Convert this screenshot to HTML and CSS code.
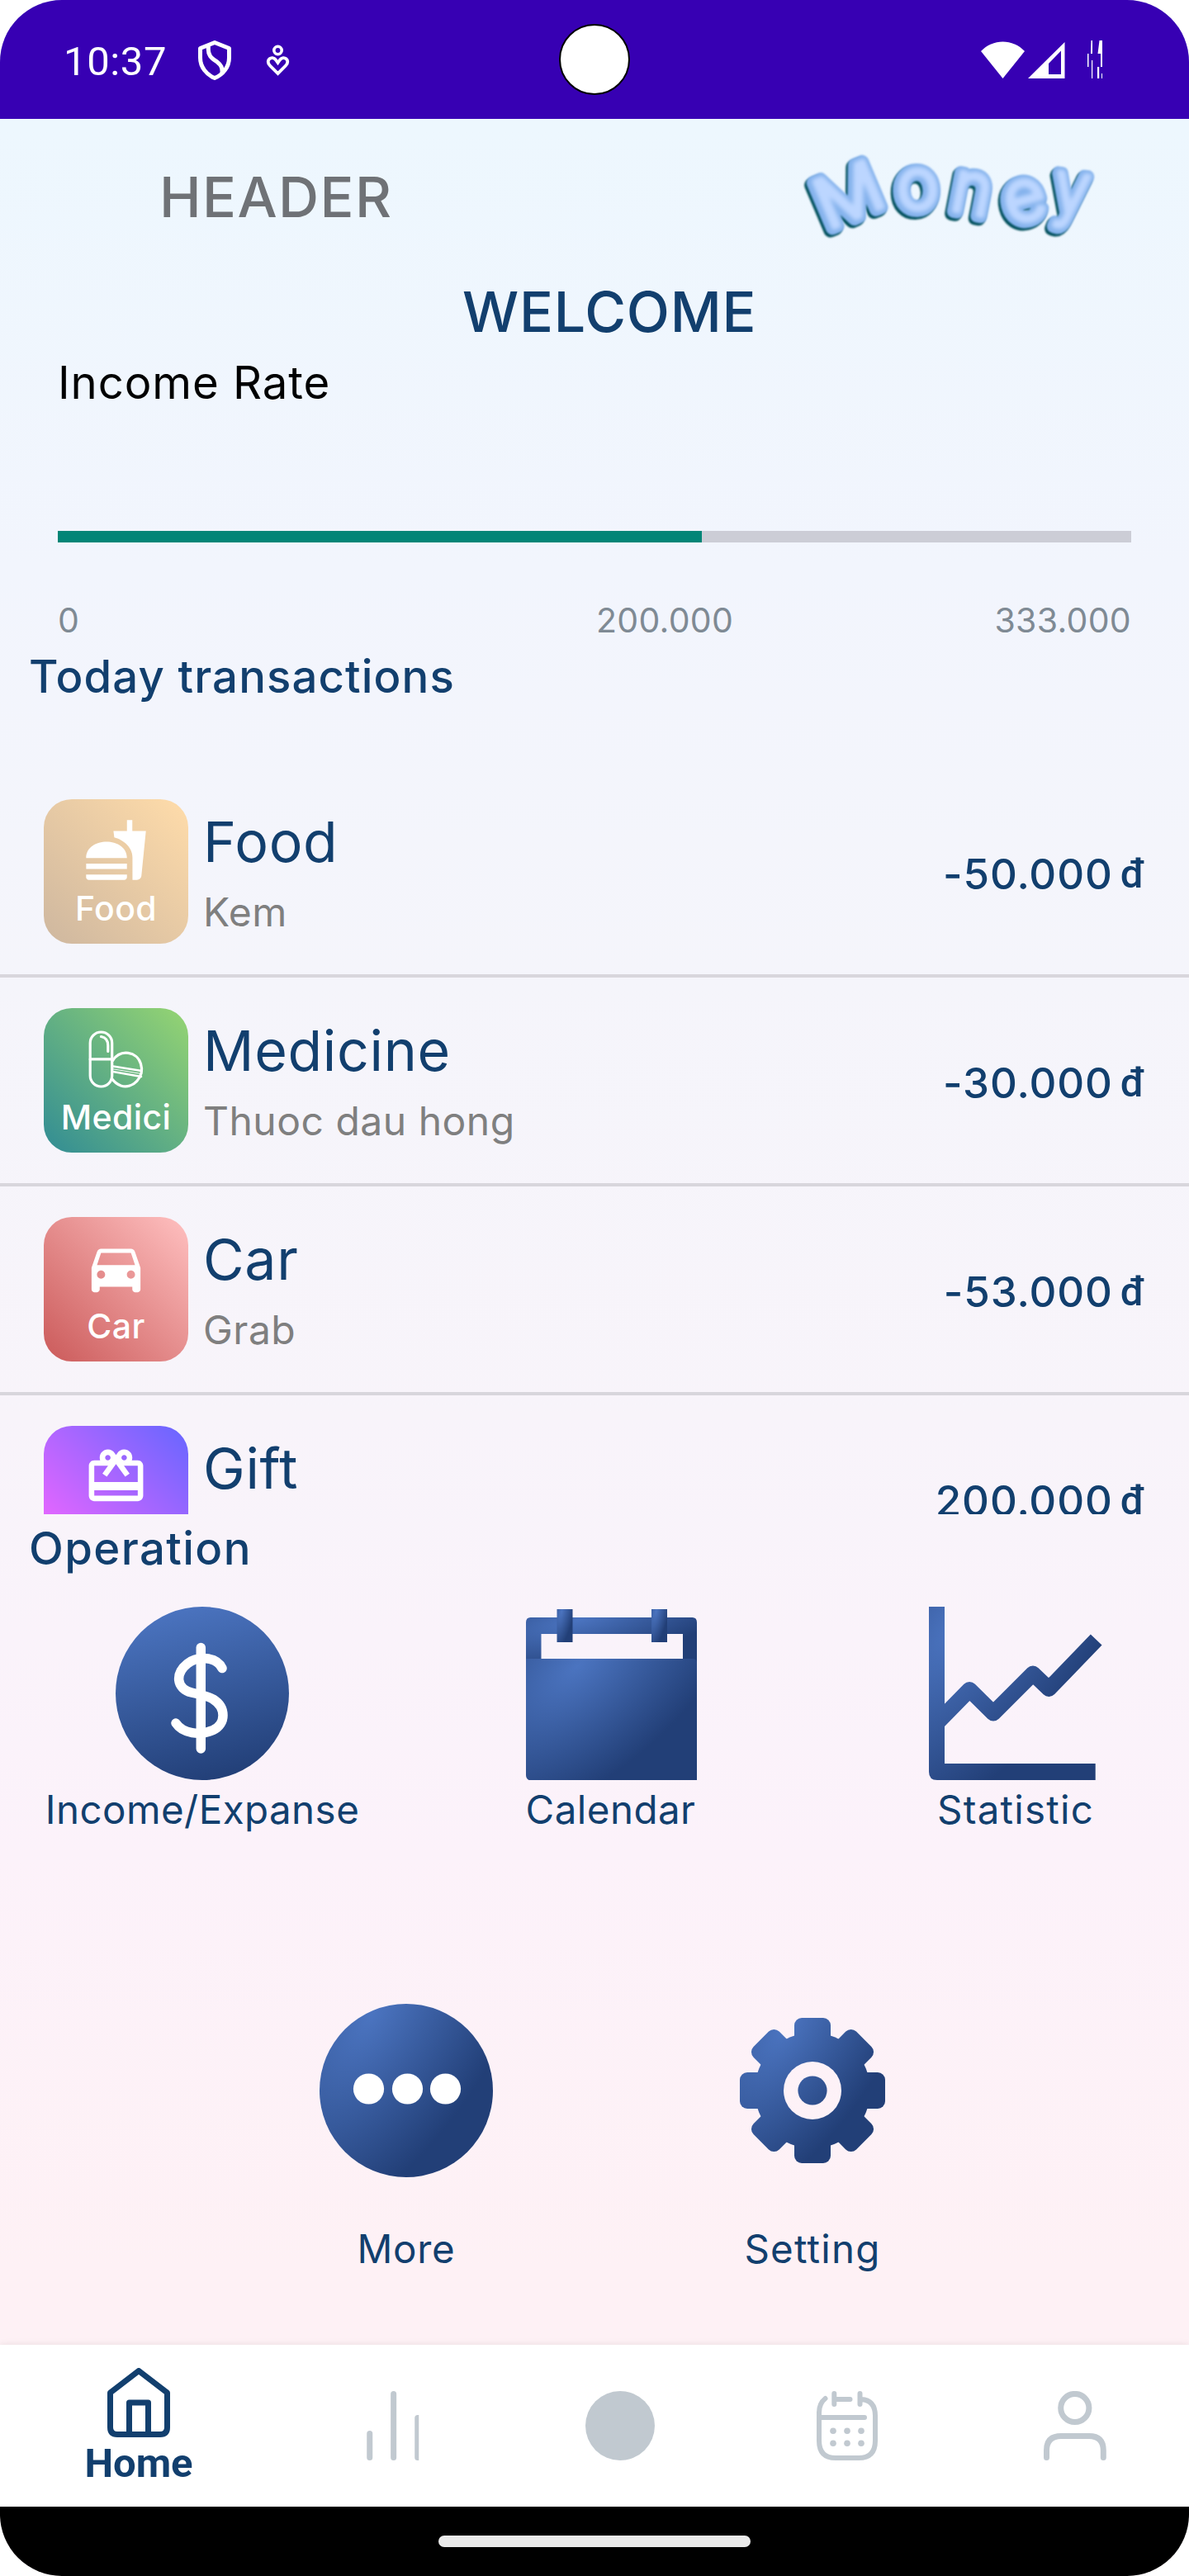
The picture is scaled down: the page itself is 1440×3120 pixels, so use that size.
FILE: index.html
```html
<!DOCTYPE html>
<html lang="en">
<head>
<meta charset="utf-8">
<title>Money</title>
<link rel="stylesheet" href="styles.css">
</head>
<body>
<div class="phone">
  <header class="status">
    <span class="clock">10:37</span>
    <svg class="status-left" viewBox="236 42 120 60">
      <g fill="none" stroke="#fff" stroke-linejoin="round">
        <path stroke-width="5" d="M260 51.500L277.500 58.500V70C277.500 81 270 90.500 260 94.500C250 90.500 242.500 81 242.500 70V58.500Z"/>
        <path stroke-width="5" d="M252.500 56C251 68 257 71 263 75C268 79 269.500 82 269 89"/>
        <circle cx="336.500" cy="61" r="4.700" stroke-width="3.600"/>
        <path stroke-width="3.800" stroke-linejoin="miter" d="M336.500 89L327 79.500C320.500 73 329.500 66.500 334 72.500L336.500 76L339 72.500C343.500 66.500 352.500 73 346 79.500Z"/>
      </g>
    </svg>
    <i class="camera"></i>
    <svg class="status-right" viewBox="1186 42 152 60">
      <g fill="#fff">
        <path d="M1188 62C1202 46.500 1227 46.500 1241 62L1214.500 95Z"/>
        <path fill-rule="evenodd" d="M1245 95L1289.500 51V95ZM1270 90H1285V61.500L1270 77Z"/>
        <path d="M1321.500 49h1.500v16h-2zM1317 65h1.500v16h-1.500zM1322 73h1.200v22h-1.200zM1331.500 49h3.500v16h-5.500zM1333 65h2v16h-2zM1329 81h2.200v14h-2.200zM1334 89h1v6h-1z"/>
      </g>
    </svg>
  </header>

  <div class="topbar">
    <span class="topbar-title">HEADER</span>
    <svg class="logo" viewBox="966 180 370 120">
      <defs>
        <filter id="soft" x="-20%" y="-20%" width="140%" height="140%"><feGaussianBlur stdDeviation="2.800"/></filter>
        <filter id="edge" x="-20%" y="-20%" width="140%" height="140%"><feGaussianBlur stdDeviation="1"/></filter>
      </defs>
      <g class="logo-shade" transform="translate(-2.500 3)" filter="url(#edge)">
        <text transform="translate(1038 265) rotate(-23) scale(1.080 1)">M</text><text class="round" transform="translate(1111 255) rotate(-2)">o</text><text class="round" transform="translate(1171 260) rotate(11) scale(.940 1)">n</text><text class="round" transform="translate(1246 268) rotate(-15)">e</text><text class="round" transform="translate(1293 260) rotate(8) scale(.880 1)">y</text>
      </g>
      <g class="logo-body" filter="url(#edge)">
        <text transform="translate(1038 265) rotate(-23) scale(1.080 1)">M</text><text class="round" transform="translate(1111 255) rotate(-2)">o</text><text class="round" transform="translate(1171 260) rotate(11) scale(.940 1)">n</text><text class="round" transform="translate(1246 268) rotate(-15)">e</text><text class="round" transform="translate(1293 260) rotate(8) scale(.880 1)">y</text>
      </g>
      <g class="logo-shine" transform="translate(1.500 -1)" filter="url(#soft)">
        <text transform="translate(1038 265) rotate(-23) scale(1.080 1)">M</text><text class="round" transform="translate(1111 255) rotate(-2)">o</text><text class="round" transform="translate(1171 260) rotate(11) scale(.940 1)">n</text><text class="round" transform="translate(1246 268) rotate(-15)">e</text><text class="round" transform="translate(1293 260) rotate(8) scale(.880 1)">y</text>
      </g>
    </svg>
  </div>

  <h1 class="welcome">WELCOME</h1>

  <section class="income">
    <h2 class="income-title">Income Rate</h2>
    <div class="bar"><div class="bar-fill" style="width:60%"></div></div>
    <div class="scale"><span>0</span><span>200.000</span><span>333.000</span></div>
  </section>

  <h2 class="heading today">Today transactions</h2>
  <ul class="list">
    <li class="row">
      <div class="tile food">
        <svg class="tile-icon" viewBox="0 0 24 24"><path d="M18.060 22.990h1.660c.84 0 1.530-.64 1.630-1.460L23 5.050h-5V1h-1.970v4.050h-4.970l.3 2.340c1.710.47 3.310 1.320 4.270 2.260 1.440 1.420 2.430 2.890 2.430 5.290v8.050zM1 21.990V21h15.030v.99c0 .55-.45 1-1.010 1H2.010c-.56 0-1.010-.45-1.010-1zm15.030-7c0-8-15.030-8-15.030 0h15.030zM1.020 17h15v2h-15z"/></svg>
        <span class="tile-label">Food</span>
      </div>
      <div class="info"><span class="name">Food</span><span class="note">Kem</span></div>
      <span class="amount">-50.000</span><span class="unit">đ</span>
    </li>
    <li class="row">
      <div class="tile medicine">
        <svg class="tile-icon" viewBox="101 1242.500 79 79">
          <g fill="none" stroke="#fff" stroke-width="3.200" stroke-linecap="round">
            <rect x="109.200" y="1249.500" width="26.500" height="66" rx="13.250"/>
            <path d="M109.200 1282.400H135.700M122.500 1255C128 1256 130.800 1260 130.800 1266V1273"/>
            <path d="M136.500 1284C146 1269.500 166 1273 170.500 1288C175.500 1304 161 1319 146.500 1314.500C141 1312.500 138 1309.500 135.500 1306"/>
            <path stroke-width="2.600" d="M137 1291L171.500 1296.500M137 1297.500L171 1303.500"/>
            <path stroke-width="1" d="M137 1294.300L171 1300"/>
          </g>
        </svg>
        <span class="tile-label">Medici</span>
      </div>
      <div class="info"><span class="name">Medicine</span><span class="note">Thuoc dau hong</span></div>
      <span class="amount">-30.000</span><span class="unit">đ</span>
    </li>
    <li class="row">
      <div class="tile car">
        <svg class="tile-icon" viewBox="0 0 24 24"><path d="M18.920 6.010C18.720 5.420 18.160 5 17.500 5h-11c-.66 0-1.210.42-1.420 1.010L3 12v8c0 .55.45 1 1 1h1c.55 0 1-.45 1-1v-1h12v1c0 .55.45 1 1 1h1c.55 0 1-.45 1-1v-8l-2.080-5.990zM6.500 16c-.83 0-1.500-.67-1.500-1.500S5.670 13 6.500 13s1.500.67 1.500 1.500S7.330 16 6.500 16zm11 0c-.83 0-1.500-.67-1.500-1.500s.67-1.500 1.500-1.500 1.500.67 1.500 1.500-.67 1.500-1.500 1.500zM5 11l1.500-4.500h11L19 11H5z"/></svg>
        <span class="tile-label">Car</span>
      </div>
      <div class="info"><span class="name">Car</span><span class="note">Grab</span></div>
      <span class="amount">-53.000</span><span class="unit">đ</span>
    </li>
    <li class="row">
      <div class="tile gift">
        <svg class="tile-icon" viewBox="0 0 24 24"><path d="M20 6h-2.180c.11-.31.18-.65.18-1 0-1.660-1.340-3-3-3-1.050 0-1.960.54-2.500 1.350l-.5.67-.5-.68C10.960 2.540 10.050 2 9 2 7.340 2 6 3.340 6 5c0 .35.07.69.18 1H4c-1.110 0-1.990.89-1.990 2L2 19c0 1.110.89 2 2 2h16c1.110 0 2-.89 2-2V8c0-1.110-.89-2-2-2zm-5-2c.55 0 1 .45 1 1s-.45 1-1 1-1-.45-1-1 .45-1 1-1zM9 4c.55 0 1 .45 1 1s-.45 1-1 1-1-.45-1-1 .45-1 1-1zm11 15H4v-2h16v2zm0-5H4V8h5.080L7 10.830 8.620 12 11 8.760l1-1.360 1 1.360L15.380 12 17 10.830 14.920 8H20v6z"/></svg>
      </div>
      <div class="info"><span class="name">Gift</span></div>
      <span class="amount">200.000</span><span class="unit">đ</span>
    </li>
  </ul>

  <h2 class="heading operation">Operation</h2>
  <nav class="ops ops-first">
    <a class="op">
      <svg class="op-icon" viewBox="140 1946 210 210">
        <defs><linearGradient id="coin" x1=".35" y1="0" x2=".6" y2="1"><stop offset="0" stop-color="#4b74c0"/><stop offset="1" stop-color="#223f77"/></linearGradient></defs>
        <circle cx="245" cy="2051" r="105" fill="url(#coin)"/>
        <g fill="none" stroke="#fff" stroke-width="11.500" stroke-linecap="round">
          <path d="M243.300 1995.500V2118"/>
          <path d="M269 2020.500C262 2006 239 2005.500 227 2015C212 2027 213 2045 232 2050C240 2052 250 2053.500 258 2058C274 2068 274 2088 258 2095.500C242 2102.500 221 2099.500 213 2087"/>
        </g>
      </svg>
      <span class="op-label tight">Income/Expanse</span>
    </a>
    <a class="op op-middle">
      <svg class="op-icon" viewBox="634.500 1946 210 210">
        <defs>
          <radialGradient id="deep" cx="0" cy="0" r="1" gradientTransform="translate(.3 .06) rotate(33) scale(.73 1.500)"><stop offset="0" stop-color="#4b74c0"/><stop offset="1" stop-color="#223f77"/></radialGradient>
        </defs>
        <path fill="url(#deep)" fill-rule="evenodd" d="M642 1959H838Q843.500 1959 843.500 1965V2016H636.500V1965Q636.500 1959 642 1959ZM655 1979V2009H826.500V1979Z"/>
        <path fill="url(#deep)" d="M636.500 2009H838Q843.500 2009 843.500 2014V2156H640Q636.500 2154 636.500 2150Z"/>
        <path fill="url(#deep)" d="M674 1949H693V1989H674Z"/>
        <path fill="url(#deep)" d="M788.500 1949H807.500V1989H788.500Z"/>
      </svg>
      <span class="op-label tight">Calendar</span>
    </a>
    <a class="op">
      <svg class="op-icon" viewBox="1125 1946 210 210">
        <defs><radialGradient id="chart" gradientUnits="userSpaceOnUse" cx="0" cy="0" r="1" gradientTransform="translate(1160 1970) rotate(40) scale(160 340)"><stop offset="0" stop-color="#4b74c0"/><stop offset="1" stop-color="#223f77"/></radialGradient></defs>
        <path fill="url(#chart)" d="M1125 1946H1144V2136H1326.700V2156H1135Q1125 2156 1125 2146Z"/>
        <path fill="none" stroke="url(#chart)" stroke-width="19" stroke-linejoin="round" d="M1136 2085.500L1174.200 2046.500L1203 2075L1251 2027L1270.300 2045.500L1327.700 1986"/>
      </svg>
      <span class="op-label wide">Statistic</span>
    </a>
  </nav>
  <nav class="ops ops-second">
    <a class="op">
      <svg class="op-icon" viewBox="0 0 210 210">
        <circle cx="105" cy="105" r="105" fill="url(#deep)"/>
        <g fill="#fff"><circle cx="59.500" cy="103" r="18.600"/><circle cx="106.500" cy="103" r="18.600"/><circle cx="152.500" cy="103" r="18.600"/></g>
      </svg>
      <span class="op-label">More</span>
    </a>
    <a class="op">
      <svg class="op-icon" viewBox="879 2427 210 210">
        <defs>
          <mask id="cog" maskUnits="userSpaceOnUse" x="879" y="2427" width="210" height="210">
            <g fill="#fff">
              <circle cx="984" cy="2532" r="70"/>
              <rect x="962" y="2444" width="44" height="176" rx="9"/>
              <rect x="962" y="2444" width="44" height="176" rx="9" transform="rotate(45 984 2532)"/>
              <rect x="962" y="2444" width="44" height="176" rx="9" transform="rotate(90 984 2532)"/>
              <rect x="962" y="2444" width="44" height="176" rx="9" transform="rotate(135 984 2532)"/>
            </g>
            <circle cx="984" cy="2532" r="35" fill="#000"/>
            <circle cx="984" cy="2532" r="17.600" fill="#fff"/>
          </mask>
          <radialGradient id="gear" gradientUnits="userSpaceOnUse" cx="0" cy="0" r="1" gradientTransform="translate(950 2455) rotate(33) scale(125 265)"><stop offset="0" stop-color="#4b74c0"/><stop offset="1" stop-color="#223f77"/></radialGradient>
        </defs>
        <rect x="879" y="2427" width="210" height="210" fill="url(#gear)" mask="url(#cog)"/>
      </svg>
      <span class="op-label wide">Setting</span>
    </a>
  </nav>

  <nav class="tabs">
    <a class="tab tab-home">
      <svg class="tab-icon" viewBox="126 2868 84 84">
        <g fill="none" stroke="#123f6e" stroke-width="7" stroke-linejoin="round">
          <path d="M133.500 2898L168 2871.500L202.500 2898V2940Q202.500 2948.500 194 2948.500H142Q133.500 2948.500 133.500 2940Z"/>
          <path d="M156.500 2948V2910H179.500V2948"/>
        </g>
      </svg>
      <span class="tab-label">Home</span>
    </a>
    <a class="tab"><svg class="tab-icon" viewBox="432.750 2896 84 84"><g fill="none" stroke="#c1c9d0" stroke-width="7" stroke-linecap="round"><path d="M447.500 2947.500V2976.500M476.400 2899.500V2976.500"/></g><path fill="#c1c9d0" d="M507 2925V2980H505.500Q502 2980 502 2976.500V2928.500Q502 2925 505.500 2925Z"/></svg></a>
    <a class="tab"><svg class="tab-icon" viewBox="0 0 84 84"><circle cx="42" cy="42" r="42" fill="#c1c9d0"/></svg></a>
    <a class="tab"><svg class="tab-icon" viewBox="984 2896 84 84">
      <g fill="none" stroke="#c1c9d0" stroke-width="6" stroke-linecap="round">
        <path d="M999.500 2905Q992 2911 992 2922V2956Q992 2977 1012 2977H1040Q1060 2977 1060 2956V2926Q1060 2907 1043 2906M1010.500 2906H1029.500M1010.300 2899V2912M1041.500 2899V2912M993 2928H1047"/>
      </g>
      <g fill="#c1c9d0"><circle cx="1009" cy="2944.300" r="3.800"/><circle cx="1026" cy="2944.300" r="3.800"/><circle cx="1043" cy="2944.300" r="3.800"/><circle cx="1009" cy="2959.300" r="3.800"/><circle cx="1026" cy="2959.300" r="3.800"/><circle cx="1043" cy="2959.300" r="3.800"/></g>
    </svg></a>
    <a class="tab"><svg class="tab-icon" viewBox="1260 2896 84 84"><g fill="none" stroke="#c1c9d0" stroke-width="7" stroke-linecap="round"><circle cx="1301.800" cy="2916.500" r="17.100"/><path d="M1267.500 2976.500V2968Q1267.500 2950.500 1285 2950.500H1319Q1336.300 2950.500 1336.300 2968V2976.500"/></g></svg></a>
  </nav>
  <footer class="gesture"><i class="pill"></i></footer>
</div>
</body>
</html>
```
FILE: styles.css
```css
* { box-sizing: border-box; }

body {
  margin: 0;
  background: #fff;
  font-family: Inter, "Liberation Sans", sans-serif;
}

.phone {
  width: 1440px;
  height: 3120px;
  display: flex;
  flex-direction: column;
  overflow: hidden;
  border-radius: 75px;
  background: linear-gradient(180deg, #edf7fe 5%, #f2f5fd 22%, #f5f5fb 38%, #f8f4fa 55%, #fcf2fa 72%, #fef1f5 88%);
  color: #123f6e;
}

h1, h2, ul { margin: 0; padding: 0; }
h1, h2 { font-weight: 500; }

svg { display: block; flex: none; }

/* Status bar */
.status {
  position: relative;
  flex: none;
  height: 144px;
  padding: 0 102px 0 77px;
  display: flex;
  align-items: center;
  background: #3700b3;
}
.clock {
  width: 159px;
  padding-top: 5px;
  font: 400 49px/56px Roboto, sans-serif;
  letter-spacing: .6px;
  color: #fff;
}
.status-left { width: 120px; height: 60px; }
.status-right { width: 152px; height: 60px; margin-left: auto; }
.camera {
  position: absolute;
  left: 677px;
  top: 29px;
  width: 86px;
  height: 86px;
  border: 2px solid #000;
  border-radius: 50%;
  background: #fff;
}

/* Title and logo */
.topbar {
  flex: none;
  height: 191px;
  padding: 0 104px 2px 193px;
  display: flex;
  align-items: center;
  justify-content: space-between;
}
.topbar-title {
  padding-bottom: 2px;
  font-size: 68px;
  line-height: 80px;
  font-weight: 500;
  letter-spacing: 1.4px;
  color: #6f7276;
}
.logo { width: 370px; height: 120px; overflow: visible; }
.logo text {
  font-family: Inter, sans-serif;
  font-weight: 300;
  font-size: 83px;
  text-anchor: middle;
  stroke-linejoin: round;
  stroke-linecap: round;
}
.logo text.round { font-size: 87px; }
.logo-shade text { fill: #04505c; stroke: #04505c; stroke-width: 16px; }
.logo-body text { fill: #84b2ec; stroke: #84b2ec; stroke-width: 16px; }
.logo-shine text { fill: #bcd6ff; stroke: #bcd6ff; stroke-width: 6px; }

.welcome {
  padding-left: 560px;
  font-size: 68px;
  line-height: 84px;
  letter-spacing: .8px;
}

/* Income progress */
.income { margin-top: 10px; padding: 0 70px; }
.income-title {
  font-size: 54.5px;
  line-height: 68px;
  font-weight: 400;
  letter-spacing: .93px;
  color: #000;
}
.bar { margin-top: 146px; height: 14px; background: #cccdd6; }
.bar-fill { height: 100%; background: #018577; }
.scale {
  margin-top: 69px;
  display: grid;
  grid-template-columns: 652px 1fr auto;
  font-size: 41px;
  line-height: 50px;
  letter-spacing: .3px;
  color: #7f8a94;
}

.heading {
  padding-left: 35px;
  font-size: 54.5px;
  line-height: 68px;
}
.today { margin-top: 9px; letter-spacing: 1.1px; }
.operation { margin-top: 7px; letter-spacing: 1.4px; }

/* Transactions */
.list {
  flex: none;
  height: 903px;
  margin-top: 78px;
  overflow: hidden;
  list-style: none;
}
.row {
  height: 253px;
  padding: 0 53px;
  display: flex;
  align-items: flex-start;
  border-bottom: 4px solid #d8d6dc;
}
.tile {
  width: 175px;
  height: 175px;
  margin: 37px 18px 0 0;
  padding-top: 21.5px;
  display: flex;
  flex-direction: column;
  align-items: center;
  border-radius: 34px;
  color: #fff;
}
.food { background: linear-gradient(45deg, #ceb79f, #ffdcaa); }
.medicine { background: linear-gradient(45deg, #318c94, #96d572); }
.car { background: linear-gradient(45deg, #cb5a5a, #ffc0c0); }
.gift { background: linear-gradient(45deg, #ff66ff, #6666ff); }
.tile-icon { width: 79px; height: 79px; fill: #fff; }
.tile-label {
  margin-top: 7px;
  font-size: 41px;
  line-height: 48px;
  font-weight: 500;
  letter-spacing: .4px;
}
.info {
  flex: 1;
  padding-top: 46px;
  display: flex;
  flex-direction: column;
  gap: 14px;
}
.name { font-size: 68px; line-height: 84px; letter-spacing: .7px; }
.note { font-size: 48px; line-height: 60px; letter-spacing: .5px; color: #7f7f7f; }
.amount {
  margin: 96px 9px 0 0;
  font-size: 51px;
  line-height: 64px;
  font-weight: 500;
  letter-spacing: .9px;
}
.unit {
  margin-top: 96px;
  font: 500 49px/64px Roboto, sans-serif;
}

/* Operations */
.ops { display: flex; justify-content: space-between; }
.ops-first { margin-top: 37px; padding: 0 105px 0 140px; }
.ops-second { margin-top: 205px; padding: 0 351px 0 387px; }
.op {
  width: 210px;
  display: flex;
  flex-direction: column;
  align-items: center;
  gap: 6px;
}
.ops-second .op { gap: 57px; }
.op-middle { margin-left: 4px; }
.op-icon { width: 210px; height: 210px; }
.op-label { font-size: 47.5px; line-height: 60px; letter-spacing: .7px; white-space: nowrap; }
.tight { letter-spacing: .44px; }
.wide { letter-spacing: 1.2px; }

/* Bottom tabs */
.tabs {
  flex: none;
  height: 196px;
  margin-top: auto;
  padding: 0 96px 0 95px;
  display: flex;
  align-items: center;
  justify-content: space-between;
  background: #fff;
  box-shadow: 0 -1px 8px rgba(0, 0, 0, .07);
}
.tab { width: 84px; }
.tab-home {
  width: 146px;
  padding-top: 4px;
  display: flex;
  flex-direction: column;
  align-items: center;
  gap: 4px;
}
.tab-icon { width: 84px; height: 84px; }
.tab-label { font: 700 49px/56px Roboto, sans-serif; }

.gesture {
  flex: none;
  height: 84px;
  display: flex;
  align-items: center;
  justify-content: center;
  background: #000;
}
.pill { width: 378px; height: 14px; border-radius: 7px; background: #eaeaea; }
```
